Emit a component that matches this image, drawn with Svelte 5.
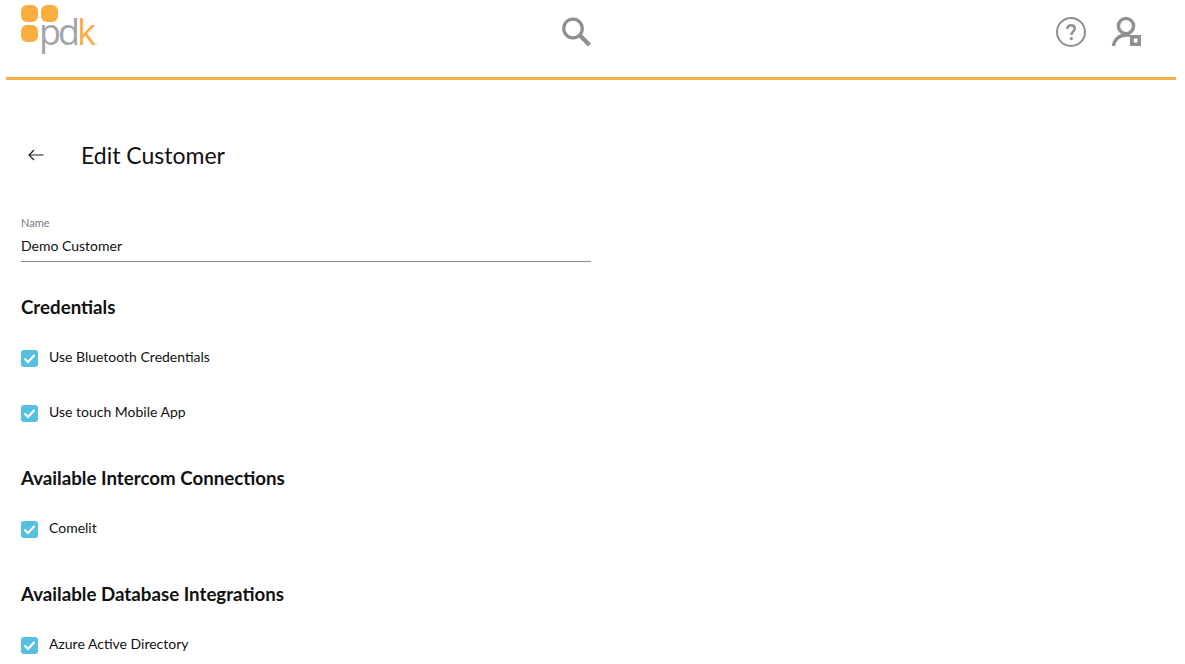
<script>
  const sections = [
    { title: "Credentials", items: ["Use Bluetooth Credentials", "Use touch Mobile App"] },
    { title: "Available Intercom Connections", items: ["Comelit"] },
    { title: "Available Database Integrations", items: ["Azure Active Directory"] }
  ];
</script>

<div class="page">
  <header class="topbar">
    <div class="logo">
      <div class="dots">
        <span></span><span></span><span></span>
      </div>
      <div class="wordmark"><span class="pd">pd</span><span class="k">k</span><span class="tm">.</span></div>
    </div>
    <svg class="search" width="34" height="34" viewBox="0 0 34 34" fill="none" stroke="#8f8f8f">
      <circle cx="14" cy="13.5" r="9.3" stroke-width="3.2" />
      <path d="M21 20.5 L30.5 30" stroke-width="4.2" />
    </svg>
    <div class="actions">
      <svg width="32" height="32" viewBox="0 0 32 32" fill="none">
        <circle cx="16" cy="16" r="14" stroke="#8f8f8f" stroke-width="2" />
        <path d="M12.4 13 C12.4 10.4 14 9.2 16 9.2 C18.2 9.2 19.8 10.6 19.8 12.6 C19.8 15.2 16.4 15.6 16.4 19" stroke="#8f8f8f" stroke-width="2.4" />
        <circle cx="16.4" cy="22.6" r="1.6" fill="#8f8f8f" />
      </svg>
      <svg width="32" height="32" viewBox="0 0 32 32" fill="none">
        <circle cx="15" cy="10" r="7.6" stroke="#8f8f8f" stroke-width="3.4" />
        <path d="M2.5 30 C3 24 8 19 15 19 L19 19" stroke="#8f8f8f" stroke-width="3.4" />
        <path fill-rule="evenodd" clip-rule="evenodd" d="M19 19 H30 V30 H19 Z M22.8 22.4 V26.6 H26.4 V22.4 Z" fill="#8f8f8f" />
      </svg>
    </div>
  </header>

  <main class="content">
    <div class="title-row">
      <svg class="back" width="16" height="12" viewBox="0 0 16 12" fill="none" stroke="#222" stroke-width="1.2">
        <path d="M15.5 6 H1 M6 1 L1 6 L6 11" />
      </svg>
      <h1>Edit Customer</h1>
    </div>

    <div class="field">
      <span class="field-label">Name</span>
      <span class="field-value">Demo Customer</span>
    </div>

    {#each sections as section}
      <h2>{section.title}</h2>
      <div class="options">
        {#each section.items as item}
          <div class="option">
            <span class="box">
              <svg width="17" height="17" viewBox="0 0 17 17" fill="none" stroke="#fff" stroke-width="2.2">
                <path d="M3.5 8.5 L7 12 L13.5 5" />
              </svg>
            </span>
            <span>{item}</span>
          </div>
        {/each}
      </div>
    {/each}
  </main>
</div>

<style>
  :global(body) {
    background: #fff;
    font-family: Lato, "Open Sans", sans-serif;
    color: #111;
  }
  .page {
    height: 664px;
    overflow: hidden;
    padding: 0 9px 0 6px;
  }
  .topbar {
    height: 77px;
    border-bottom: 3px solid #f6b04a;
    display: grid;
    grid-template-columns: 1fr 1fr 1fr;
    align-items: start;
  }
  .logo {
    position: relative;
    margin: 5px 0 0 15px;
    height: 50px;
  }
  .dots {
    display: grid;
    grid-template-columns: 17px 17px;
    grid-auto-rows: 17px;
    gap: 3px;
  }
  .dots span {
    background: #fbae40;
    border-radius: 6px;
  }
  .wordmark {
    position: absolute;
    left: 18px;
    top: 3px;
    font-size: 36px;
    line-height: 48px;
    font-weight: 400;
    letter-spacing: -3px;
    font-family: "Open Sans", sans-serif;
  }
  .pd {
    color: #a0a5a9;
  }
  .k {
    color: #fbae40;
  }
  .tm {
    color: #a0a5a9;
    font-size: 8px;
    letter-spacing: 0;
    margin-left: 3px;
  }
  .search {
    justify-self: center;
    margin-top: 15px;
    margin-right: 30px;
  }
  .actions {
    justify-self: end;
    display: flex;
    gap: 24px;
    margin: 16px 33px 0 0;
  }
  .content {
    padding-left: 15px;
  }
  .title-row {
    display: flex;
    align-items: center;
    gap: 37px;
    margin-top: 58px;
    padding-left: 7px;
    height: 34px;
  }
  .back {
    flex: none;
  }
  h1 {
    margin: 0;
    font-size: 23px;
    line-height: 32px;
    font-weight: 400;
  }
  .field {
    width: 570px;
    margin-top: 43px;
    border-bottom: 1px solid #8c8c8c;
    display: flex;
    flex-direction: column;
    height: 47px;
    box-sizing: border-box;
  }
  .field-label {
    font-size: 11px;
    line-height: 14px;
    color: #7c7685;
    margin-top: 1px;
  }
  .field-value {
    font-size: 14px;
    line-height: 20px;
    margin-top: 6px;
  }
  h2 {
    margin: 0;
    font-size: 18.72px;
    line-height: 24px;
    font-weight: 700;
  }
  .field + h2 {
    margin-top: 33px;
  }
  .options {
    display: flex;
    flex-direction: column;
    gap: 31px;
    margin: 27px 0 41px;
  }
  .option {
    display: flex;
    align-items: center;
    gap: 11px;
    font-size: 14px;
    line-height: 24px;
    height: 24px;
  }
  .option span:last-child {
    position: relative;
    top: -1px;
  }
  .box {
    width: 17px;
    height: 17px;
    border-radius: 3px;
    background: #56c0e0;
    display: flex;
    align-items: center;
    justify-content: center;
  }
</style>
